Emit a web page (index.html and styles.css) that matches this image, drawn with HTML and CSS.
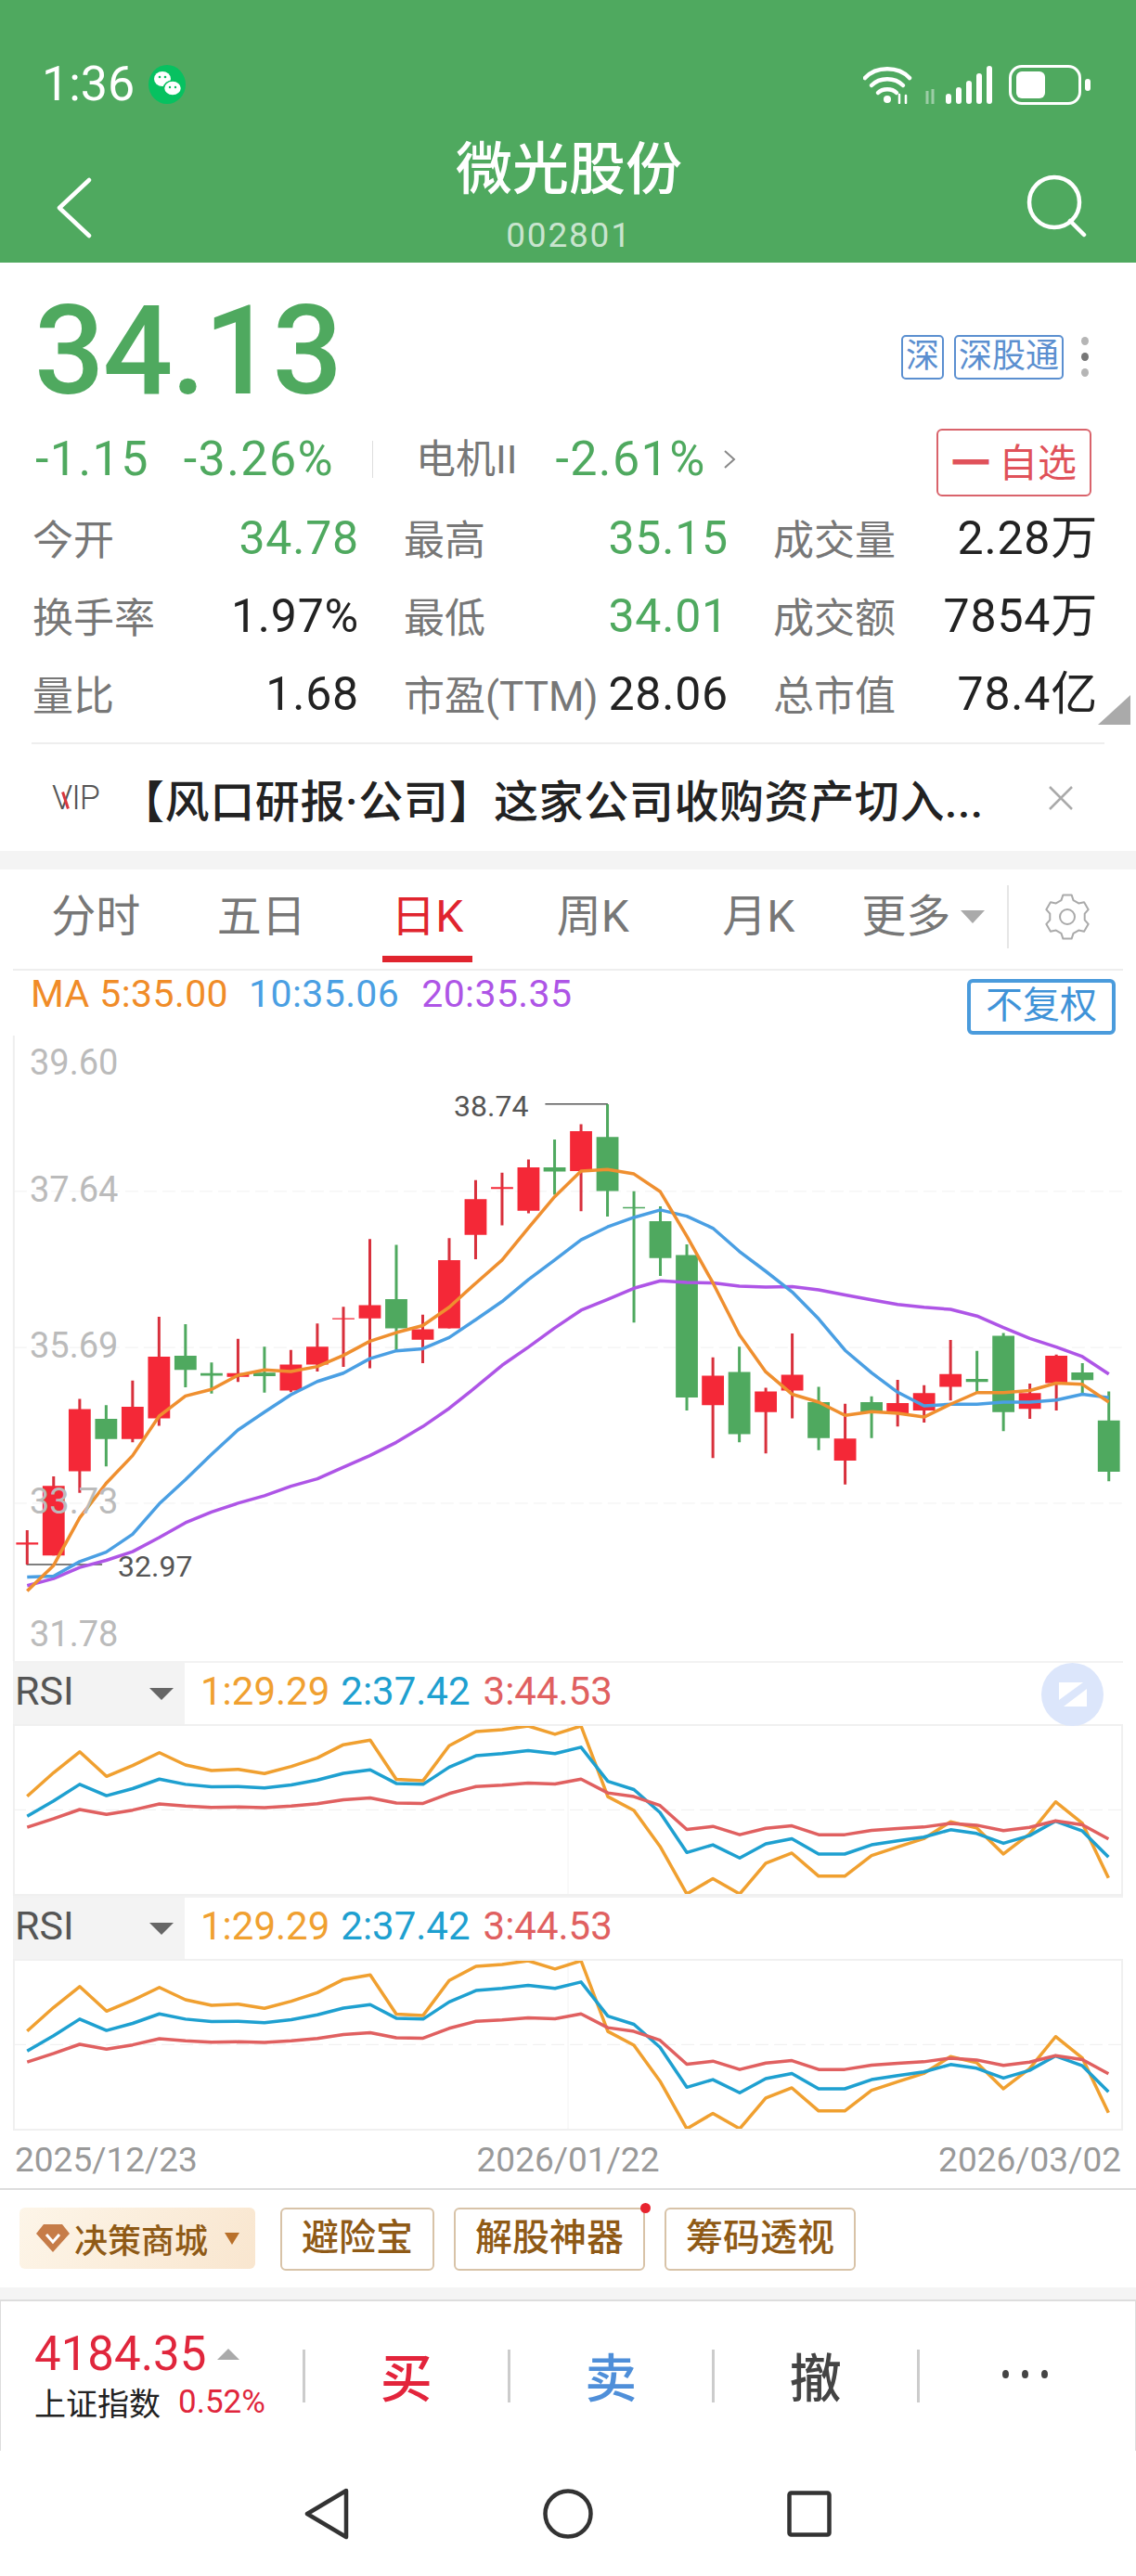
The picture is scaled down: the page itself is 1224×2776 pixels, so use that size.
FILE: index.html
```html
<!DOCTYPE html>
<html lang="zh-CN">
<head>
    <meta charset="UTF-8">
    <title>微光股份</title>
    <link rel="stylesheet" href="styles.css">
</head>
<body>
<div class="app">
    <header class="topbar">
        <div class="status">
            <span class="clock">1:36</span>
            <svg class="wechat" viewBox="0 0 40 42">
                <ellipse cx="20" cy="21" rx="20" ry="21" fill="#07c160"/>
                <ellipse cx="15" cy="15" rx="9" ry="8" fill="#fff"/>
                <ellipse cx="26" cy="25" rx="9.5" ry="8" fill="#fff" stroke="#07c160" stroke-width="1.5"/>
                <circle cx="12" cy="13" r="1.3" fill="#07c160"/><circle cx="18" cy="13" r="1.3" fill="#07c160"/>
                <circle cx="23" cy="24" r="1.2" fill="#07c160"/><circle cx="29" cy="24" r="1.2" fill="#07c160"/>
            </svg>
            <span class="status-right">
                <svg class="wifi" viewBox="0 0 54 42" fill="none" stroke="#fff" stroke-width="4.5" stroke-linecap="round">
                    <path d="M2 14C14 1 38 1 50 14"/><path d="M9 22C18 13 34 13 43 22"/><path d="M16 30C21 25 31 25 36 30"/>
                    <circle cx="26" cy="37" r="4" fill="#fff" stroke="none"/>
                    <path d="M39 41V32M46 41V33" stroke-width="2.5"/>
                </svg>
                <svg class="signal" viewBox="0 0 76 42">
                    <path d="M3 42V28M9 42V26" stroke="#9ccda6" stroke-width="3" fill="none"/>
                    <rect x="23" y="31" width="6" height="11" rx="3" fill="#fff"/>
                    <rect x="34" y="24" width="6" height="18" rx="3" fill="#fff"/>
                    <rect x="45" y="17" width="6" height="25" rx="3" fill="#fff"/>
                    <rect x="56" y="9" width="6" height="33" rx="3" fill="#fff"/>
                    <rect x="67" y="1" width="6" height="41" rx="3" fill="#fff"/>
                </svg>
                <span class="battery"><span class="battery-fill"></span></span>
                <span class="battery-nub"></span>
            </span>
        </div>
        <div class="nav">
            <svg class="back" viewBox="0 0 40 66" fill="none" stroke="#fff" stroke-width="4.5" stroke-linecap="round" stroke-linejoin="round">
                <path d="M36 3L4 33L36 63"/>
            </svg>
            <div class="title-block">
                <div class="title">微光股份</div>
                <div class="code">002801</div>
            </div>
            <svg class="search" viewBox="0 0 66 68" fill="none" stroke="#fff" stroke-width="4.5" stroke-linecap="round">
                <circle cx="30" cy="30" r="27"/><path d="M47 50L62 65"/>
            </svg>
        </div>
    </header>

    <section class="quote">
        <div class="price-row">
            <div class="price">34.13</div>
            <div class="tags">
                <span class="tag">深</span>
                <span class="tag">深股通</span>
                <span class="dots"><i></i><i class="mid"></i><i></i></span>
            </div>
        </div>
        <div class="change-row">
            <div class="change-info">
                <span class="green">-1.15</span>
                <span class="green pct">-3.26%</span>
                <span class="vline"></span>
                <span class="sector">电机II</span>
                <span class="green sector-pct">-2.61%</span>
                <svg class="chev" viewBox="0 0 14 20" fill="none" stroke="#888" stroke-width="2"><path d="M2 1L12 10L2 19"/></svg>
            </div>
            <span class="watch"><b>一</b>自选</span>
        </div>
        <div class="stats">
            <div class="stat"><span>今开</span><strong class="green">34.78</strong></div>
            <div class="stat"><span>最高</span><strong class="green">35.15</strong></div>
            <div class="stat"><span>成交量</span><strong>2.28万</strong></div>
            <div class="stat"><span>换手率</span><strong>1.97%</strong></div>
            <div class="stat"><span>最低</span><strong class="green">34.01</strong></div>
            <div class="stat"><span>成交额</span><strong>7854万</strong></div>
            <div class="stat"><span>量比</span><strong>1.68</strong></div>
            <div class="stat"><span>市盈(TTM)</span><strong>28.06</strong></div>
            <div class="stat"><span>总市值</span><strong>78.4亿</strong></div>
            <span class="corner"></span>
        </div>
        <div class="news">
            <span class="vip">VIP</span>
            <span class="news-text">【风口研报·公司】这家公司收购资产切入...</span>
            <svg class="close" viewBox="0 0 28 28" fill="none" stroke="#aaa" stroke-width="2.5"><path d="M2 2L26 26M26 2L2 26"/></svg>
        </div>
    </section>

    <div class="gap"></div>

    <section class="kline">
        <div class="tabs">
            <span class="tab">分时</span>
            <span class="tab">五日</span>
            <span class="tab active">日K</span>
            <span class="tab">周K</span>
            <span class="tab">月K</span>
            <span class="tab more">更多<i class="caret"></i></span>
            <span class="gear-cell">
                <svg class="gear" viewBox="0 0 50 50" fill="none" stroke="#aaa" stroke-width="2" stroke-linejoin="round">
                    <path d="M20.4 1.4L29.6 1.4L31.5 7.1L37.2 10.4L43.1 9.3L47.7 17.2L43.7 21.7L43.7 28.3L47.7 32.8L43.1 40.7L37.2 39.6L31.5 42.9L29.6 48.6L20.4 48.6L18.5 42.9L12.8 39.6L6.9 40.7L2.3 32.8L6.3 28.3L6.3 21.7L2.3 17.2L6.9 9.3L12.8 10.4L18.5 7.1Z"/>
                    <circle cx="25" cy="25" r="8"/>
                </svg>
            </span>
        </div>
        <div class="ma-row">
            <span class="ma5">MA 5:35.00</span>
            <span class="ma10">10:35.06</span>
            <span class="ma20">20:35.35</span>
            <span class="adjust">不复权</span>
        </div>
        <div class="chart">
            <svg class="chart-svg" viewBox="0 36 3136 1510" preserveAspectRatio="none">
                <g class="grid">
                    <path d="M38 412H3100M38 789H3100M38 1165H3100"/>
                </g>
                <path class="axis" d="M38 36V1546"/>
                <path class="marker" d="M1505 201H1676V280M75 1260V1313H282"/>
                <path class="wick red" d="M75 1230V1313M148 1100V1291M220 913V1140M366 869V1018M439 715V978M657 768V872M803 795V897M876 731V847M948 691V836M1021 527V839M1167 710V827M1240 525V743M1313 385V576M1386 367V494M1459 335V465M1604 250V460M1968 813V1056M2114 886V1045M2187 755V960M2333 925V1120M2478 867V980M2551 880V970M2624 771V917M2843 876V961M2916 806V941"/>
                <path class="wick green" d="M293 928V1076M512 733V885M584 825V900M730 787V898M1094 541V800M1531 287V420M1677 202V473M1750 412V729M1823 448V616M1896 540V941M2041 787V1018M2260 884V1037M2406 907V1008M2697 797V897M2770 754V991M2988 827V905M3061 895V1112"/>
                <path class="body red" d="M44.5 1260h61v5h-61zM117.5 1123h61v168h-61zM189.5 938h61v150h-61zM335.5 932h61v78h-61zM408.5 811h61v149h-61zM626.5 851h61v9h-61zM772.5 830h61v63h-61zM845.5 787h61v43h-61zM917.5 718h61v3h-61zM990.5 687h61v32h-61zM1136.5 745h61v25h-61zM1209.5 578h61v165h-61zM1282.5 431h61v86h-61zM1355.5 402h61v4h-61zM1428.5 354h61v105h-61zM1573.5 267h61v96h-61zM1937.5 857h61v71h-61zM2083.5 895h61v50h-61zM2156.5 855h61v38h-61zM2302.5 1009h61v53h-61zM2447.5 923h61v25h-61zM2520.5 899h61v42h-61zM2593.5 853h61v31h-61zM2812.5 899h61v38h-61zM2885.5 809h61v66h-61z"/>
                <path class="body green" d="M262.5 961h61v49h-61zM481.5 809h61v34h-61zM553.5 851h61v6h-61zM699.5 850h61v8h-61zM1063.5 672h61v71h-61zM1500.5 354h61v10h-61zM1646.5 281h61v130h-61zM1719.5 450h61v3h-61zM1792.5 484h61v89h-61zM1865.5 566h61v344h-61zM2010.5 848h61v150h-61zM2229.5 921h61v87h-61zM2375.5 921h61v24h-61zM2666.5 865h61v7h-61zM2739.5 761h61v184h-61zM2957.5 849h61v19h-61zM3030.5 965h61v124h-61z"/>
                <polyline class="line l-ma20" points="75,1364 148,1347 220,1320 293,1303 366,1282 439,1248 512,1212 584,1186 657,1165 730,1147 803,1124 876,1106 948,1078 1021,1050 1094,1018 1167,980 1240,936 1313,885 1386,832 1459,788 1531,742 1604,699 1677,673 1750,646 1823,628 1896,632 1968,633 2041,641 2114,643 2187,642 2260,650 2333,662 2406,674 2478,685 2551,692 2624,697 2697,713 2770,741 2843,767 2916,788 2988,811 3061,853"/>
                <polyline class="line l-ma10" points="75,1343 148,1341 220,1306 293,1283 366,1240 439,1167 512,1108 584,1047 657,988 730,945 803,903 876,871 948,851 1021,816 1094,797 1167,792 1240,765 1313,722 1386,678 1459,625 1531,578 1604,529 1677,498 1750,475 1823,457 1896,472 1968,501 2041,557 2114,605 2187,655 2260,720 2333,796 2406,850 2478,897 2551,930 2624,926 2697,926 2770,921 2843,921 2916,916 2988,902 3061,910"/>
                <polyline class="line l-ma5" points="75,1377 148,1315 220,1200 293,1117 366,1050 439,955 512,906 584,890 657,856 730,843 803,847 876,835 948,808 1021,774 1094,753 1167,736 1240,692 1313,634 1386,578 1459,500 1531,425 1604,363 1677,359 1750,370 1823,413 1896,520 1968,633 2041,758 2114,848 2187,902 2260,921 2333,953 2406,944 2478,948 2551,957 2624,926 2697,898 2770,898 2843,893 2916,875 2988,878 3061,921"/>
            </svg>
            <span class="axis-label l1">39.60</span>
            <span class="axis-label l2">37.64</span>
            <span class="axis-label l3">35.69</span>
            <span class="axis-label l4">33.73</span>
            <span class="axis-label l5">31.78</span>
            <span class="peak hi">38.74</span>
            <span class="peak lo">32.97</span>
        </div>

        <div class="rsi">
            <div class="rsi-head">
                <span class="rsi-select">RSI<i class="rsi-caret"></i></span>
                <span class="r1">1:29.29</span><span class="r2">2:37.42</span><span class="r3">3:44.53</span>
                <span class="zoom-btn">
                    <svg viewBox="0 0 30 26"><path d="M0 0H26L0 19Z M30 7V26H5Z" fill="#fff"/></svg>
                </span>
            </div>
            <svg class="rsi-plot" viewBox="20.5 238 1527 547" preserveAspectRatio="none">
                <path class="rsi-grid" d="M18 511H1548"/>
                <path class="rsi-vert" d="M784 238V785"/>
                <polyline class="line r-1" points="37.5,467 74,390 110,322 147,402 183,367 220,325 256,365 292,383 329,379 365,393 402,370 438,342 474,299 511,284 547,412 584,416 620,302 657,256 693,250 729,238 766,265 802,238 839,468 875,513 911,630 948,785 984,735 1021,785 1057,685 1093,652 1130,727 1166,727 1203,660 1239,632 1275,605 1312,550 1348,570 1385,655 1421,590 1457,485 1494,555 1530,733"/>
                <polyline class="line r-2" points="37.5,532 74,482 110,428 147,465 183,442 220,411 256,428 292,436 329,435 365,440 402,430 438,414 474,392 511,381 547,425 584,428 620,372 657,335 693,328 729,318 766,328 802,307 839,418 875,445 911,520 948,650 984,625 1021,668 1057,622 1093,605 1130,655 1166,655 1203,625 1239,612 1275,600 1312,576 1348,588 1385,620 1421,595 1457,548 1494,580 1530,665"/>
                <polyline class="line r-3" points="37.5,568 74,540 110,510 147,526 183,512 220,492 256,499 292,503 329,502 365,504 402,499 438,491 474,478 511,472 547,489 584,490 620,458 657,435 693,431 729,424 766,427 802,411 839,456 875,468 911,497 948,575 984,565 1021,592 1057,571 1093,563 1130,592 1166,592 1203,578 1239,572 1275,567 1312,555 1348,561 1385,579 1421,568 1457,547 1494,560 1530,606"/>
            </svg>
        </div>
        <div class="rsi">
            <div class="rsi-head">
                <span class="rsi-select">RSI<i class="rsi-caret"></i></span>
                <span class="r1">1:29.29</span><span class="r2">2:37.42</span><span class="r3">3:44.53</span>
            </div>
            <svg class="rsi-plot" viewBox="20.5 238 1527 547" preserveAspectRatio="none">
                <path class="rsi-grid" d="M18 511H1548"/>
                <path class="rsi-vert" d="M784 238V785"/>
                <polyline class="line r-1" points="37.5,467 74,390 110,322 147,402 183,367 220,325 256,365 292,383 329,379 365,393 402,370 438,342 474,299 511,284 547,412 584,416 620,302 657,256 693,250 729,238 766,265 802,238 839,468 875,513 911,630 948,785 984,735 1021,785 1057,685 1093,652 1130,727 1166,727 1203,660 1239,632 1275,605 1312,550 1348,570 1385,655 1421,590 1457,485 1494,555 1530,733"/>
                <polyline class="line r-2" points="37.5,532 74,482 110,428 147,465 183,442 220,411 256,428 292,436 329,435 365,440 402,430 438,414 474,392 511,381 547,425 584,428 620,372 657,335 693,328 729,318 766,328 802,307 839,418 875,445 911,520 948,650 984,625 1021,668 1057,622 1093,605 1130,655 1166,655 1203,625 1239,612 1275,600 1312,576 1348,588 1385,620 1421,595 1457,548 1494,580 1530,665"/>
                <polyline class="line r-3" points="37.5,568 74,540 110,510 147,526 183,512 220,492 256,499 292,503 329,502 365,504 402,499 438,491 474,478 511,472 547,489 584,490 620,458 657,435 693,431 729,424 766,427 802,411 839,456 875,468 911,497 948,575 984,565 1021,592 1057,571 1093,563 1130,592 1166,592 1203,578 1239,572 1275,567 1312,555 1348,561 1385,579 1421,568 1457,547 1494,560 1530,606"/>
            </svg>
        </div>
        <div class="dates">
            <span>2025/12/23</span><span>2026/01/22</span><span>2026/03/02</span>
        </div>
    </section>

    <section class="tools">
        <span class="mall">
            <svg class="gem" viewBox="0 0 36 30">
                <path d="M8 0H28L36 10L18 30L0 10Z" fill="#c67c48"/>
                <path d="M11 11L18 19L25 11" fill="none" stroke="#fff" stroke-width="3"/>
            </svg>
            决策商城
            <i class="mall-caret"></i>
        </span>
        <span class="tool">避险宝</span>
        <span class="tool dotted">解股神器</span>
        <span class="tool">筹码透视</span>
    </section>

    <div class="gap small"></div>

    <section class="trade">
        <div class="index">
            <div class="index-top"><span class="index-val">4184.35</span><i class="index-up"></i></div>
            <div class="index-bot"><span>上证指数</span><span class="index-pct">0.52%</span></div>
        </div>
        <span class="act buy">买</span>
        <span class="act sell">卖</span>
        <span class="act undo">撤</span>
        <span class="act more-act"><i></i><i></i><i></i></span>
    </section>

    <nav class="sysnav">
        <svg class="sys-back" viewBox="0 0 48 56" fill="none" stroke="#333" stroke-width="4.5" stroke-linejoin="round"><path d="M45 3L3 28L45 53Z"/></svg>
        <svg class="sys-home" viewBox="0 0 54 54" fill="none" stroke="#333" stroke-width="4.5"><circle cx="27" cy="27" r="24.5"/></svg>
        <svg class="sys-recent" viewBox="0 0 48 50" fill="none" stroke="#333" stroke-width="4.5" stroke-linejoin="round"><rect x="2.5" y="2.5" width="43" height="45" rx="2"/></svg>
    </nav>
</div>
</body>
</html>
```

FILE: styles.css
```css
* {
    box-sizing: border-box;
}

body {
    margin: 0;
    background: #fff;
    font-family: Roboto, "Noto Sans CJK SC", sans-serif;
    color: #222;
}

i {
    display: block;
}

.app {
    width: 1224px;
    height: 2776px;
    overflow: hidden;
}

.green {
    color: #4fa95f;
}

/* top bar */
.topbar {
    height: 283px;
    background: #4fa95f;
    color: #fff;
    padding-top: 60px;
}

.status {
    display: flex;
    align-items: center;
    height: 62px;
    padding: 0 49px 0 45px;
}

.clock {
    font-size: 52px;
    line-height: 66px;
    width: 115px;
}

.wechat {
    width: 40px;
    height: 42px;
}

.status-right {
    display: flex;
    align-items: center;
    margin-left: auto;
}

.wifi {
    width: 54px;
    height: 42px;
}

.signal {
    width: 76px;
    height: 42px;
    margin-left: 12px;
    margin-right: 15px;
}

.battery {
    display: block;
    width: 78px;
    height: 43px;
    border: 3px solid #fff;
    border-radius: 14px;
    padding: 4px 5px;
}

.battery-fill {
    display: block;
    width: 31px;
    height: 29px;
    background: #fff;
    border-radius: 6px;
}

.battery-nub {
    width: 6px;
    height: 13px;
    margin-left: 4px;
    background: #fff;
    border-radius: 3px;
}

.nav {
    display: grid;
    grid-template-columns: 1fr auto 1fr;
    padding: 28px 52px 0 60px;
}

.title-block {
    margin-left: -6px;
    text-align: center;
}

.title {
    font-size: 61px;
    line-height: 66px;
    font-weight: 500;
}

.code {
    margin-top: 17px;
    font-size: 37px;
    line-height: 42px;
    letter-spacing: 1.8px;
    color: #c9e4ce;
}

.back {
    width: 40px;
    height: 66px;
    margin-top: 41px;
}

.search {
    justify-self: end;
    width: 66px;
    height: 68px;
    margin-top: 38px;
}

/* quote block */
.quote {
    height: 634px;
}

.price-row {
    display: flex;
    height: 179px;
    padding: 31px 49px 0 37px;
}

.price {
    font-size: 133px;
    font-weight: 500;
    line-height: 130px;
    color: #4fa95f;
    letter-spacing: -1.8px;
}

.tags {
    display: flex;
    align-items: flex-start;
    margin-left: auto;
    padding-top: 47px;
    gap: 11px;
}

.tag {
    height: 48px;
    padding: 0 3px;
    border: 2px solid #5b8fd0;
    border-radius: 5px;
    color: #5b8fd0;
    font-size: 36px;
    line-height: 42px;
}

.dots {
    width: 10px;
    padding-top: 2px;
    margin-left: 8px;
}

.dots i {
    width: 8px;
    height: 9px;
    margin-bottom: 8px;
    border-radius: 50%;
    background: #b5b5b5;
}

.dots i.mid {
    background: #777;
}

.change-row {
    display: flex;
    align-items: center;
    height: 73px;
    padding: 0 48px 0 38px;
}

.change-info {
    display: flex;
    align-items: center;
    padding-bottom: 8px;
    font-size: 52px;
    line-height: 60px;
    letter-spacing: 1.4px;
}

.pct {
    margin-left: 37px;
}

.vline {
    width: 1px;
    height: 40px;
    margin-left: 41px;
    background: #ddd;
}

.sector {
    margin-left: 46px;
    color: #777;
    font-size: 43px;
    letter-spacing: 0;
}

.sector-pct {
    margin-left: 41px;
}

.chev {
    width: 14px;
    height: 20px;
    margin-left: 18px;
}

.watch {
    display: block;
    margin-left: auto;
    width: 167px;
    height: 73px;
    border: 2px solid #d9636b;
    border-radius: 6px;
    color: #e0525a;
    font-size: 42px;
    line-height: 72px;
    text-align: center;
}

.watch b {
    font-weight: 700;
    margin-right: 9px;
}

.stats {
    position: relative;
    display: grid;
    grid-template-columns: 349px 347px 347px;
    column-gap: 51px;
    grid-auto-rows: 84px;
    padding-left: 36px;
    margin-top: 3px;
}

.stat {
    display: flex;
    justify-content: space-between;
    align-items: center;
}

.stat span {
    padding-top: 6px;
    margin-left: -1px;
    color: #777;
    font-size: 44px;
    line-height: 60px;
}

.stat strong {
    margin-right: -2px;
    font-size: 50px;
    font-weight: 400;
    line-height: 60px;
    letter-spacing: 0.8px;
    white-space: nowrap;
}

.corner {
    position: absolute;
    right: 6px;
    top: 211px;
    width: 35px;
    height: 32px;
    background: #aaa;
    clip-path: polygon(100% 0, 100% 100%, 0 100%);
}

.news {
    display: flex;
    align-items: center;
    height: 117px;
    margin: 10px 34px 0;
    padding: 0 0 0 22px;
    border-top: 2px solid #eee;
}

.vip {
    position: relative;
    width: 53px;
    font-size: 36px;
    color: #555;
    font-weight: 300;
    letter-spacing: -1px;
}

.vip::after {
    content: "";
    position: absolute;
    left: 13px;
    top: 14px;
    width: 3px;
    height: 19px;
    background: #d9363e;
    transform: rotate(-18deg);
}

.news-text {
    margin-left: 20px;
    font-size: 48px;
    font-weight: 500;
    letter-spacing: 0.6px;
    color: #222;
    white-space: nowrap;
}

.close {
    width: 28px;
    height: 28px;
    margin-left: auto;
    margin-right: 33px;
}

.gap {
    height: 20px;
    background: #f4f4f4;
}

.gap.small {
    height: 13px;
}

/* chart block */
.tabs {
    display: grid;
    grid-template-columns: repeat(6, 178.5px) 1fr;
    align-items: center;
    height: 109px;
    margin: 0 14px;
    padding-bottom: 6px;
    border-bottom: 2px solid #eee;
}

.tab {
    position: relative;
    text-align: center;
    font-size: 48px;
    line-height: 62px;
    color: #777;
}

.tab.active {
    color: #e0242e;
}

.tab.active::after {
    content: "";
    position: absolute;
    left: 41px;
    right: 41px;
    bottom: -18px;
    height: 7px;
    background: #e0242e;
}

.tab.more {
    display: flex;
    align-items: center;
    justify-content: center;
    padding-right: 2px;
}

.caret {
    width: 0;
    height: 0;
    margin-left: 11px;
    border-left: 13px solid transparent;
    border-right: 13px solid transparent;
    border-top: 14px solid #aaa;
}

.gear-cell {
    display: flex;
    align-items: center;
    height: 68px;
    padding-left: 38px;
    border-left: 2px solid #e6e6e6;
}

.gear {
    width: 50px;
    height: 50px;
}

.ma-row {
    display: flex;
    height: 70px;
    padding: 0 22px 0 33px;
    font-size: 41px;
    line-height: 50px;
    letter-spacing: 0.4px;
}

.ma5 {
    color: #f08c28;
}

.ma10 {
    margin-left: 22px;
    color: #4a9fe3;
}

.ma20 {
    margin-left: 24px;
    color: #ae55e6;
}

.adjust {
    margin-left: auto;
    width: 160px;
    height: 60px;
    margin-top: 9px;
    border: 4px solid #4a9bdc;
    border-radius: 6px;
    color: #3f93d8;
    font-size: 40px;
    line-height: 50px;
    text-align: center;
    letter-spacing: 0;
}

.chart {
    position: relative;
    height: 674px;
}

.chart-svg {
    display: block;
    width: 1224px;
    height: 674px;
}

.grid path {
    fill: none;
    stroke: #f0f0f0;
    stroke-width: 1;
    stroke-dasharray: 14 6;
    vector-effect: non-scaling-stroke;
}

.axis {
    fill: none;
    stroke: #eee;
    stroke-width: 2;
    vector-effect: non-scaling-stroke;
}

.marker {
    fill: none;
    stroke: #555;
    stroke-width: 1.5;
    vector-effect: non-scaling-stroke;
}

.wick {
    fill: none;
    stroke-width: 3;
    vector-effect: non-scaling-stroke;
}

.wick.red {
    stroke: #d8303c;
}

.wick.green {
    stroke: #4fa95f;
}

.body.red {
    fill: #f42837;
}

.body.green {
    fill: #4fa95f;
}

.line {
    fill: none;
    stroke-width: 3.5;
    stroke-linejoin: round;
    vector-effect: non-scaling-stroke;
}

.l-ma5 {
    stroke: #ef8f2f;
}

.l-ma10 {
    stroke: #4a9fe3;
}

.l-ma20 {
    stroke: #ae55e6;
}

.axis-label {
    position: absolute;
    left: 32px;
    font-size: 38px;
    line-height: 44px;
    color: #bbb;
}

.l1 { top: 7px; }
.l2 { top: 144px; }
.l3 { top: 312px; }
.l4 { top: 480px; }
.l5 { top: 623px; }

.peak {
    position: absolute;
    font-size: 32px;
    line-height: 40px;
    color: #555;
}

.hi {
    left: 489px;
    top: 56px;
}

.lo {
    left: 127px;
    top: 552px;
}

.rsi {
    margin: 0 14px;
}

.rsi-head {
    position: relative;
    display: flex;
    align-items: center;
    height: 68px;
    padding-bottom: 6px;
    border-top: 2px solid #f2f2f2;
    font-size: 42px;
}

.rsi-select {
    display: flex;
    align-items: center;
    align-self: flex-start;
    width: 185px;
    height: 66px;
    padding: 0 0 6px 2px;
    margin-right: 17px;
    background: #f3f3f3;
    color: #555;
    font-size: 43px;
}

.rsi-caret {
    width: 0;
    height: 0;
    margin: 6px 0 0 81px;
    border-left: 13px solid transparent;
    border-right: 13px solid transparent;
    border-top: 13px solid #666;
}

.r1 {
    color: #f0a030;
}

.r2 {
    margin-left: 12px;
    color: #1ea0d0;
}

.r3 {
    margin-left: 14px;
    color: #e06060;
}

.zoom-btn {
    position: absolute;
    left: 1108px;
    top: 0;
    display: flex;
    align-items: center;
    justify-content: center;
    width: 67px;
    height: 68px;
    border-radius: 50%;
    background: #dce6fb;
}

.zoom-btn svg {
    width: 30px;
    height: 26px;
}

.rsi-plot {
    display: block;
    width: 1196px;
    height: 185px;
    border: 2px solid #f0f0f0;
    overflow: hidden;
}

.rsi-grid {
    fill: none;
    stroke: #eee;
    stroke-width: 1;
    stroke-dasharray: 14 6;
    vector-effect: non-scaling-stroke;
}

.rsi-vert {
    fill: none;
    stroke: #f2f2f2;
    stroke-width: 1;
    vector-effect: non-scaling-stroke;
}

.r-1 {
    stroke: #f0a030;
}

.r-2 {
    stroke: #1ea0d0;
}

.r-3 {
    stroke: #e06060;
}

.dates {
    display: flex;
    justify-content: space-between;
    align-items: center;
    height: 62px;
    padding: 0 16px 0 16px;
    font-size: 37px;
    color: #999;
}

/* tools row */
.tools {
    display: flex;
    align-items: flex-start;
    height: 107px;
    padding: 19px 0 0 21px;
    border-top: 2px solid #ddd;
    color: #8f5a16;
}

.mall {
    display: flex;
    align-items: center;
    width: 254px;
    height: 66px;
    padding-left: 18px;
    border-radius: 6px;
    background: linear-gradient(120deg, #fdf5e8, #f9e6cf);
    font-size: 36px;
    font-weight: 500;
    white-space: nowrap;
}

.gem {
    width: 36px;
    height: 30px;
    margin-right: 5px;
}

.mall-caret {
    width: 0;
    height: 0;
    margin-left: 18px;
    border-left: 8px solid transparent;
    border-right: 8px solid transparent;
    border-top: 13px solid #b9702a;
}

.tool {
    position: relative;
    height: 68px;
    padding: 0 21px;
    margin-left: 21px;
    border: 2px solid #d8c3a8;
    border-radius: 6px;
    font-size: 40px;
    font-weight: 500;
    line-height: 62px;
    white-space: nowrap;
}

.mall + .tool {
    margin-left: 27px;
}

.dotted::after {
    content: "";
    position: absolute;
    right: -8px;
    top: -7px;
    width: 11px;
    height: 11px;
    border-radius: 50%;
    background: #e8232e;
}

/* trade bar */
.trade {
    display: flex;
    align-items: center;
    height: 163px;
    border: 1px solid #ddd;
    border-top-width: 2px;
    border-bottom: 0;
}

.index {
    width: 325px;
    padding-left: 36px;
}

.index-top {
    display: flex;
    align-items: center;
    height: 52px;
    padding-top: 2px;
}

.index-val {
    font-size: 51px;
    line-height: 52px;
    color: #e0263c;
}

.index-up {
    width: 0;
    height: 0;
    margin-left: 12px;
    border-left: 12px solid transparent;
    border-right: 12px solid transparent;
    border-bottom: 12px solid #aaa;
}

.index-bot {
    display: flex;
    align-items: center;
    height: 46px;
    margin-top: 4px;
    font-size: 34px;
}

.index-pct {
    margin-left: 19px;
    font-size: 35px;
    color: #e0263c;
}

.act {
    display: flex;
    align-items: center;
    justify-content: center;
    width: 220.5px;
    height: 57px;
    padding-bottom: 5px;
    border-left: 3px solid #ccc;
    font-size: 56px;
    font-weight: 500;
}

.buy {
    color: #e3243b;
}

.sell {
    color: #4f8fd9;
}

.undo {
    color: #444;
}

.more-act {
    gap: 14px;
    padding-left: 10px;
}

.more-act i {
    width: 7px;
    height: 9px;
    border-radius: 50%;
    background: #444;
}

/* system nav */
.sysnav {
    display: flex;
    align-items: center;
    height: 135px;
    background: #fff;
}

.sys-back {
    width: 48px;
    height: 56px;
    margin-left: 328px;
}

.sys-home {
    width: 54px;
    height: 54px;
    margin-left: 209px;
}

.sys-recent {
    width: 48px;
    height: 50px;
    margin-left: 209px;
}
```
